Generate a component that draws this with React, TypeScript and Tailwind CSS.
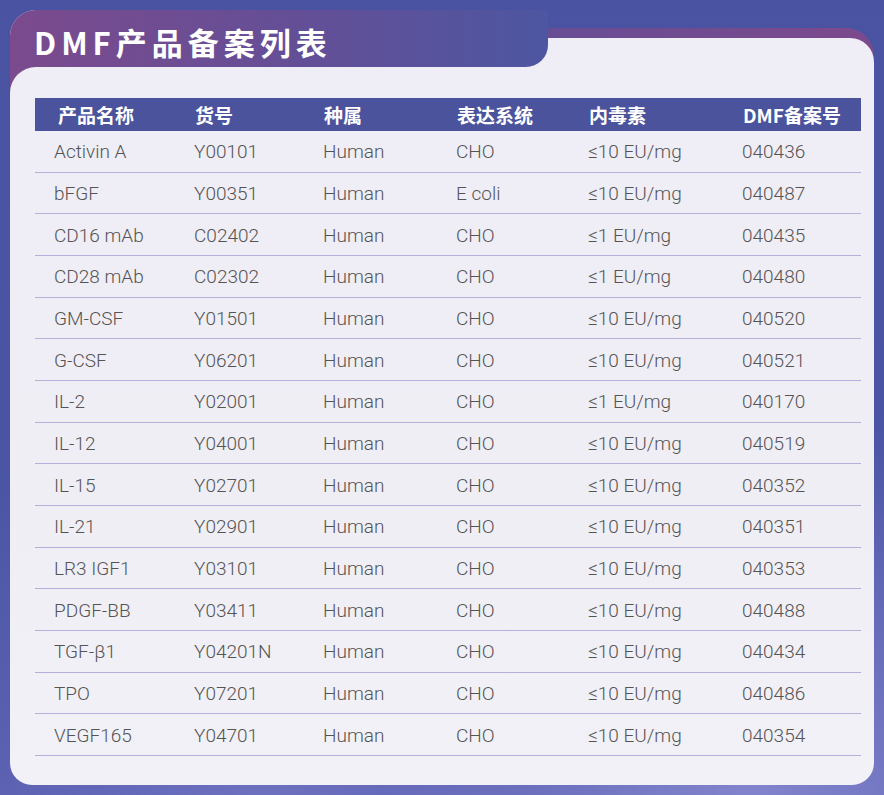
import React from "react";

type Row = [string, string, string, string, string, string];

const headers = ["产品名称", "货号", "种属", "表达系统", "内毒素", "DMF备案号"];

const rows: Row[] = [
  ["Activin A", "Y00101", "Human", "CHO", "≤10 EU/mg", "040436"],
  ["bFGF", "Y00351", "Human", "E coli", "≤10 EU/mg", "040487"],
  ["CD16 mAb", "C02402", "Human", "CHO", "≤1 EU/mg", "040435"],
  ["CD28 mAb", "C02302", "Human", "CHO", "≤1 EU/mg", "040480"],
  ["GM-CSF", "Y01501", "Human", "CHO", "≤10 EU/mg", "040520"],
  ["G-CSF", "Y06201", "Human", "CHO", "≤10 EU/mg", "040521"],
  ["IL-2", "Y02001", "Human", "CHO", "≤1 EU/mg", "040170"],
  ["IL-12", "Y04001", "Human", "CHO", "≤10 EU/mg", "040519"],
  ["IL-15", "Y02701", "Human", "CHO", "≤10 EU/mg", "040352"],
  ["IL-21", "Y02901", "Human", "CHO", "≤10 EU/mg", "040351"],
  ["LR3 IGF1", "Y03101", "Human", "CHO", "≤10 EU/mg", "040353"],
  ["PDGF-BB", "Y03411", "Human", "CHO", "≤10 EU/mg", "040488"],
  ["TGF-β1", "Y04201N", "Human", "CHO", "≤10 EU/mg", "040434"],
  ["TPO", "Y07201", "Human", "CHO", "≤10 EU/mg", "040486"],
  ["VEGF165", "Y04701", "Human", "CHO", "≤10 EU/mg", "040354"],
];

// column tracks shared by the header bar and the rows
const cols = "grid grid-cols-[140px_129px_133px_132px_154px_1fr] pl-[19px]";

export default function App() {
  return (
    <div className="h-[795px] w-[884px] overflow-hidden bg-[radial-gradient(ellipse_at_85%_100%,rgba(160,160,225,0.55),transparent_35%),radial-gradient(ellipse_at_30%_100%,rgba(140,140,215,0.35),transparent_30%),linear-gradient(180deg,#4953a1_0%,#4b55a5_60%,#5d62b3_100%)] px-[10px] pt-[10px]">
      <div className="w-[864px]">
        {/* top: title tab + purple band on the right */}
        <div className="flex">
          <div className="h-[57px] w-[538px] rounded-tl-[26px] bg-[#efedf5]">
            <div className="flex h-full items-center rounded-tl-[26px] rounded-br-[22px] bg-[linear-gradient(90deg,#7b4a8d_0%,#634f97_55%,#4e56a1_100%)] pl-[24px] pt-[6px]">
              <h1 className="font-['Noto_Sans_CJK_SC',sans-serif] text-[31px] font-bold leading-none tracking-[5px] text-white">
                DMF产品备案列表
              </h1>
            </div>
          </div>
          <div className="flex-1 pt-[18px]">
            <div className="rounded-tr-[28px] bg-[linear-gradient(90deg,#684d95_0%,#724b90_50%,#7c4a8c_100%)] pt-[10px]">
              <div className="h-[29px] rounded-tr-[24px] bg-[#efedf5]" />
            </div>
          </div>
        </div>

        {/* card body; purple strip shows behind its rounded top-left corner */}
        <div className="bg-[linear-gradient(180deg,#7a4b8e_0px,#7a4b8e_30px,transparent_30px)]">
          <div className="rounded-tl-[26px] rounded-b-[22px] bg-[linear-gradient(180deg,#efedf5_0%,#f0eef5_60%,#f2f1f7_100%)] pb-[29px] pl-[25px] pr-[13px] pt-[31px]">
            <div className={`${cols} h-[33px] items-center bg-[#4b539c] font-['Noto_Sans_CJK_SC',sans-serif] text-[19px] font-bold leading-none text-white`}>
              {headers.map((h, i) => (
                <div key={h} className={i === 0 ? "pl-[4px]" : "pl-[1px]"}>
                  {h}
                </div>
              ))}
            </div>
            {rows.map((r) => (
              <div
                key={r[0]}
                className={`${cols} h-[41.67px] items-center border-b border-[#b3b1da] pt-[1px] font-['Roboto',sans-serif] text-[19px] font-light leading-none text-[#545454]`}
              >
                {r.map((c, i) => (
                  <div key={i}>{c}</div>
                ))}
              </div>
            ))}
          </div>
        </div>
      </div>
    </div>
  );
}
